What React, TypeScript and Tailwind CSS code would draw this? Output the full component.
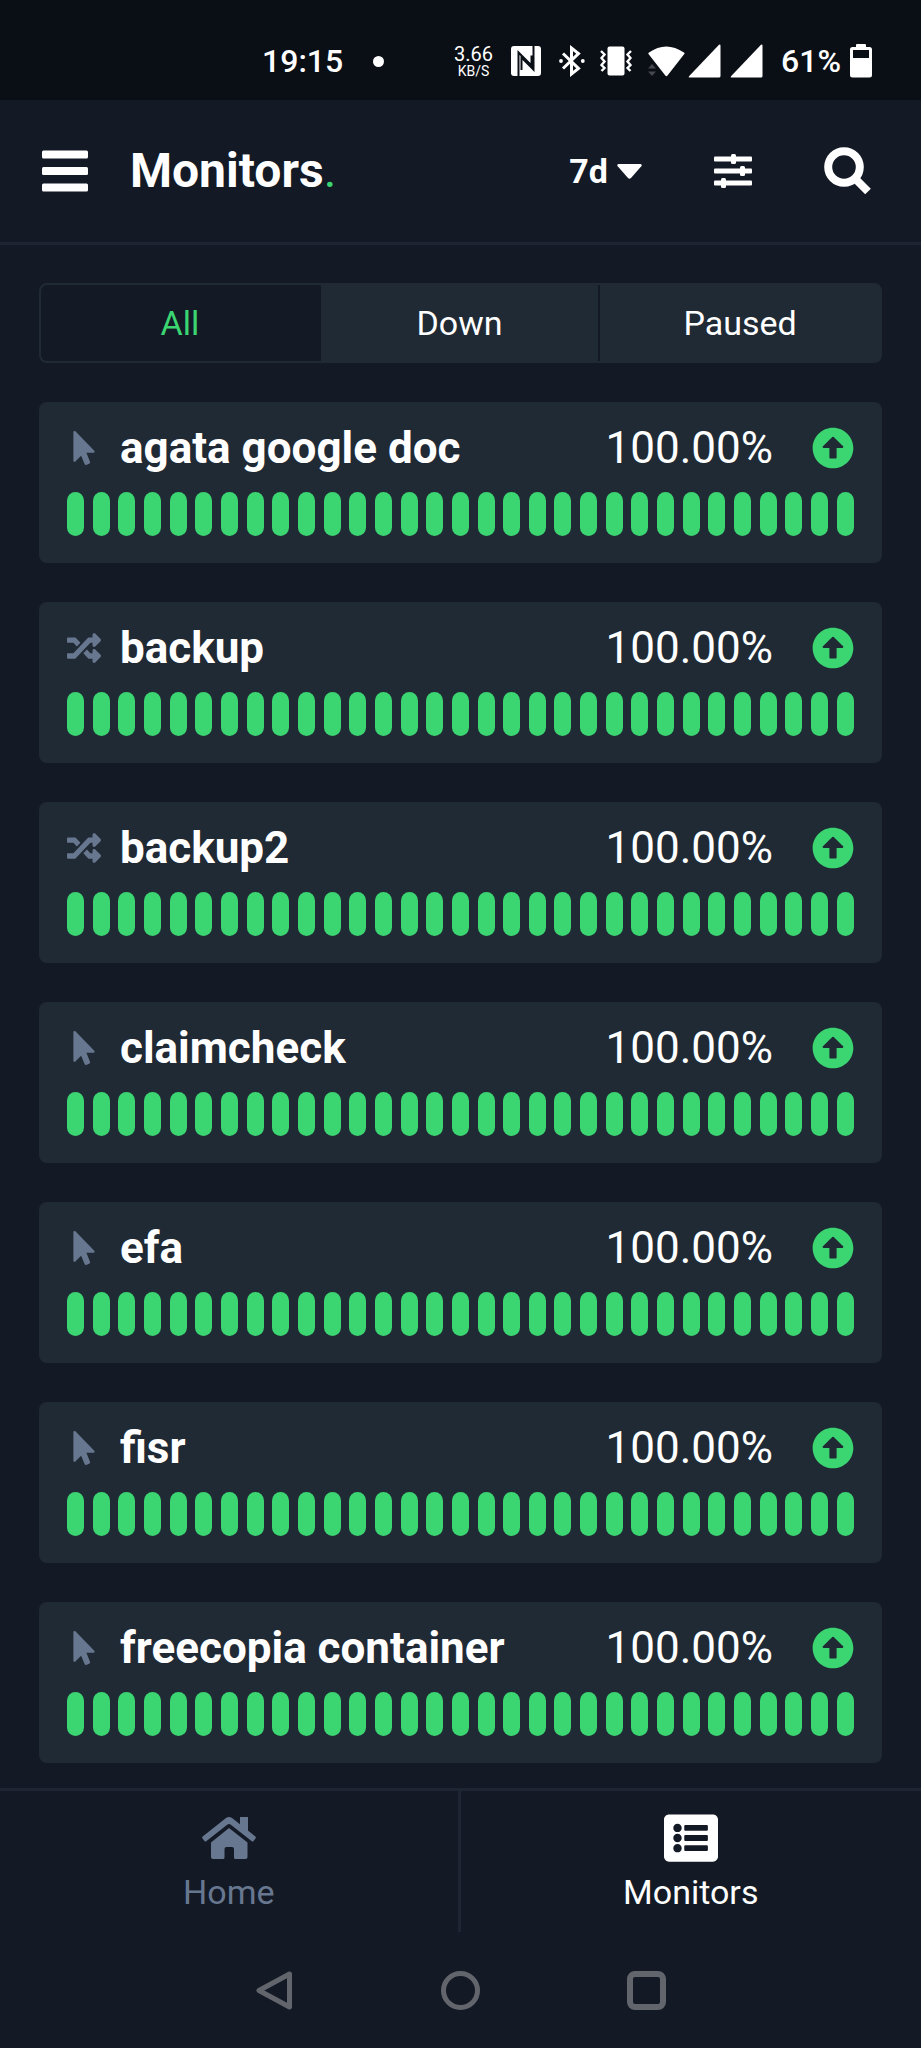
import { useState } from "react";
import {
  FaArrowAltCircleUp,
  FaListAlt,
  FaMousePointer,
  FaRandom,
} from "react-icons/fa";

type Kind = "http" | "port";

const monitors: { name: string; kind: Kind; uptime: string }[] = [
  { name: "agata google doc", kind: "http", uptime: "100.00%" },
  { name: "backup", kind: "port", uptime: "100.00%" },
  { name: "backup2", kind: "port", uptime: "100.00%" },
  { name: "claimcheck", kind: "http", uptime: "100.00%" },
  { name: "efa", kind: "http", uptime: "100.00%" },
  { name: "fisr", kind: "http", uptime: "100.00%" },
  { name: "freecopia container", kind: "http", uptime: "100.00%" },
];

const filters = ["All", "Down", "Paused"];

const BAR_COUNT = 31;

function SignalIcon() {
  return (
    <svg width="33" height="34" viewBox="0 0 33 34" fill="currentColor">
      <path d="M31 0.8Q32.5 0 32.5 2V32Q32.5 33.5 31 33.5H1.5Q0 33.5 1 32.2Z" />
    </svg>
  );
}

function StatusBar() {
  return (
    <div className="flex h-[100px] shrink-0 items-center justify-between bg-[#0a0e15] pt-[22px] pr-[49px] pl-[262px] text-white">
      <div className="flex items-center gap-[30px]">
        <span className="text-[32px] leading-[40px] font-medium">19:15</span>
        <span className="h-[11px] w-[11px] rounded-full bg-white" />
      </div>
      <div className="flex items-center">
        <div className="mr-[18px] flex flex-col items-center">
          <span className="text-[20px] leading-[20px]">3.66</span>
          <span className="text-[14px] leading-[14px]">KB/S</span>
        </div>
        {/* NFC */}
        <svg width="30" height="30" viewBox="0 0 30 30" className="mr-[18px]">
          <rect width="30" height="30" rx="3" fill="#fff" />
          <path
            d="M7.5 30V6.5L20.5 19.5V9.5M22.5 0V23.5L10.5 11.5V24"
            fill="none"
            stroke="#0a0e15"
            strokeWidth="2"
          />
        </svg>
        {/* Bluetooth */}
        <svg
          width="26"
          height="32"
          viewBox="0 0 26 32"
          className="mr-[15px]"
          fill="none"
          stroke="#fff"
          strokeWidth="3"
        >
          <path d="M4 8.5L19.5 23.5L12.5 29V3L19.5 8.5L4 23.5" />
          <circle cx="2" cy="16" r="1.9" fill="#fff" stroke="none" />
          <circle cx="23.8" cy="16" r="1.9" fill="#fff" stroke="none" />
        </svg>
        {/* Vibrate */}
        <svg width="32" height="30" viewBox="0 0 32 30" className="mr-[16px]">
          <rect x="7.5" y="0.5" width="17" height="29" rx="2" fill="#fff" />
          <path
            d="M1 5L4.5 8.5L1.5 12L4.5 15.5L1.5 19L4.5 22L1.5 25M31 5L27.5 8.5L30.5 12L27.5 15.5L30.5 19L27.5 22L30.5 25"
            fill="none"
            stroke="#fff"
            strokeWidth="2.4"
          />
        </svg>
        {/* Wifi with activity arrows */}
        <svg width="37" height="31" viewBox="0 0 37 31" className="mr-[3px]">
          <path
            d="M0.5 8Q0 7.3 1 6.5Q18 -5.5 36 6.5Q37 7.3 36.3 8L19.5 29.5Q18.4 30.8 17.3 29.5Z"
            fill="#fff"
          />
          <path d="M0 22.5L4 18L8 22.5ZM0 25.5L4 30L8 25.5Z" fill="#45484e" />
        </svg>
        <div className="mr-[18px] flex gap-[9px]">
          <SignalIcon />
          <SignalIcon />
        </div>
        <span className="mr-[9px] text-[32px] leading-[40px] font-medium">
          61%
        </span>
        {/* Battery */}
        <svg width="22" height="34" viewBox="0 0 22 34">
          <path
            d="M6 3V1Q6 0 7 0H15Q16 0 16 1V3H19.5Q22 3 22 5.5V31Q22 33.5 19.5 33.5H2.5Q0 33.5 0 31V5.5Q0 3 2.5 3ZM3 6V14H19V6Z"
            fill="#fff"
            fillRule="evenodd"
          />
        </svg>
      </div>
    </div>
  );
}

function Header() {
  return (
    <header className="flex h-[145px] shrink-0 items-center border-b-[3px] border-[#1e2634] pr-[49px] pl-[42px] text-white">
      <button type="button" aria-label="Menu" className="mr-[42px]">
        <svg width="46" height="42" viewBox="0 0 46 42" fill="currentColor">
          <rect y="0.5" width="46" height="8" rx="1.5" />
          <rect y="17" width="46" height="8" rx="1.5" />
          <rect y="33.5" width="46" height="8" rx="1.5" />
        </svg>
      </button>
      <h1 className="text-[48px] leading-[56px] font-bold">
        Monitors<span className="font-normal text-[#3bd671]">.</span>
      </h1>
      <label className="ml-auto flex items-center">
        <select
          aria-label="Period"
          className="field-sizing-content appearance-none bg-transparent text-[34px] leading-[40px] font-bold outline-none"
        >
          <option>7d</option>
        </select>
        <svg
          width="25"
          height="15"
          viewBox="0 0 25 15"
          className="ml-[9px]"
          fill="currentColor"
        >
          <path d="M1.5 0H23.5Q25.5 0.5 24.3 2.2L14 14Q12.5 15.4 11 14L0.7 2.2Q-0.5 0.5 1.5 0Z" />
        </svg>
      </label>
      <button type="button" aria-label="Display settings" className="ml-[72px]">
        <svg width="38" height="34" viewBox="0 0 38 34" fill="currentColor">
          <rect y="2.5" width="38" height="5" rx="1" />
          <rect y="14.5" width="38" height="5" rx="1" />
          <rect y="26.5" width="38" height="5" rx="1" />
          <rect x="17" width="5" height="10" rx="1.5" />
          <rect x="26" y="12" width="5" height="10" rx="1.5" />
          <rect x="7" y="24" width="5" height="10" rx="1.5" />
        </svg>
      </button>
      <button type="button" aria-label="Search" className="ml-[72px]">
        <svg width="48" height="49" viewBox="0 0 48 49">
          <circle
            cx="20"
            cy="20"
            r="15.8"
            fill="none"
            stroke="currentColor"
            strokeWidth="8"
          />
          <path
            d="M32 32.5L44 44.5"
            stroke="currentColor"
            strokeWidth="8"
          />
        </svg>
      </button>
    </header>
  );
}

function MonitorCard({
  name,
  kind,
  uptime,
}: {
  name: string;
  kind: Kind;
  uptime: string;
}) {
  return (
    <article className="rounded-[8px] bg-[#202a35] px-[28px] pt-[20px] pb-[27px]">
      <div className="flex h-[52px] items-center">
        <span className="flex w-[34px] justify-center text-[#687790]">
          {kind === "http" ? (
            <FaMousePointer size={34} />
          ) : (
            <FaRandom size={34} />
          )}
        </span>
        <h2 className="ml-[19px] flex-1 text-[44px] leading-[52px] font-bold text-white">
          {name}
        </h2>
        <span className="text-[44px] leading-[52px] text-white">{uptime}</span>
        <FaArrowAltCircleUp size={42} className="ml-[39px] text-[#3bd671]" />
      </div>
      <div className="mt-[18px] flex justify-between">
        {Array.from({ length: BAR_COUNT }, (_, i) => (
          <span key={i} className="h-[44px] w-[17px] rounded-full bg-[#3bd671]" />
        ))}
      </div>
    </article>
  );
}

function BottomNav() {
  return (
    <nav className="grid h-[144px] shrink-0 grid-cols-2 border-t-[3px] border-[#1e2634] text-[34px] leading-[40px]">
      <a
        href="#home"
        className="flex flex-col items-center border-r-[3px] border-[#1e2634] pt-[24px] text-[#687790]"
      >
        <svg width="54" height="46" viewBox="0 0 54 46" fill="currentColor">
          <path d="M38 2H46V15.5L53.3 21.5Q54.3 22.5 53.5 23.5L51.5 26Q50.5 27 49.5 26L28.5 9.5Q27 8.3 25.5 9.5L4.5 26Q3.5 27 2.5 26L0.5 23.5Q-0.3 22.5 0.7 21.5L24 3Q27 0.8 30 3L38 9.3Z" />
          <path d="M27 13L45.5 27.5V42Q45.5 44 43.5 44H33.5Q32 44 32 42.5V34Q32 32 30 32H24.5Q22.5 32 22.5 34V42.5Q22.5 44 21 44H11Q9 44 9 42V27.5Z" />
        </svg>
        <span className="mt-[11px]">Home</span>
      </a>
      <a
        href="#monitors"
        aria-current="page"
        className="flex flex-col items-center pt-[20px] text-white"
      >
        <FaListAlt size={54} />
        <span className="mt-[7px]">Monitors</span>
      </a>
    </nav>
  );
}

function SystemNav() {
  return (
    <div className="flex h-[116px] shrink-0 items-center justify-center gap-[147px] text-[#62656c]">
      <button type="button" aria-label="Back">
        <svg width="39" height="39" viewBox="0 0 39 39" fill="none">
          <path
            d="M34.5 3L4 19.5L34.5 36Z"
            stroke="currentColor"
            strokeWidth="5"
            strokeLinejoin="round"
          />
        </svg>
      </button>
      <button
        type="button"
        aria-label="Home screen"
        className="h-[39px] w-[39px] rounded-full border-[5px] border-current"
      />
      <button
        type="button"
        aria-label="Recent apps"
        className="h-[39px] w-[39px] rounded-[8px] border-[6px] border-current"
      />
    </div>
  );
}

export default function App() {
  const [filter, setFilter] = useState("All");

  return (
    <div className="flex min-h-screen flex-col bg-[#131a26] font-['Roboto',sans-serif]">
      <StatusBar />
      <Header />
      <main className="flex-1 px-[39px] pt-[38px]">
        <div className="grid h-[80px] grid-cols-3 divide-x-[2px] divide-[#131a26] overflow-hidden rounded-[8px] border-[2px] border-[#202a35] bg-[#202a35]">
          {filters.map((item) => (
            <button
              key={item}
              type="button"
              aria-pressed={filter === item}
              onClick={() => setFilter(item)}
              className={
                filter === item
                  ? "bg-[#131a26] text-[34px] leading-[40px] text-[#3bd671]"
                  : "text-[34px] leading-[40px] text-white"
              }
            >
              {item}
            </button>
          ))}
        </div>
        <section className="mt-[39px] flex flex-col gap-[39px]">
          {monitors.map((monitor) => (
            <MonitorCard key={monitor.name} {...monitor} />
          ))}
        </section>
      </main>
      <BottomNav />
      <SystemNav />
    </div>
  );
}
